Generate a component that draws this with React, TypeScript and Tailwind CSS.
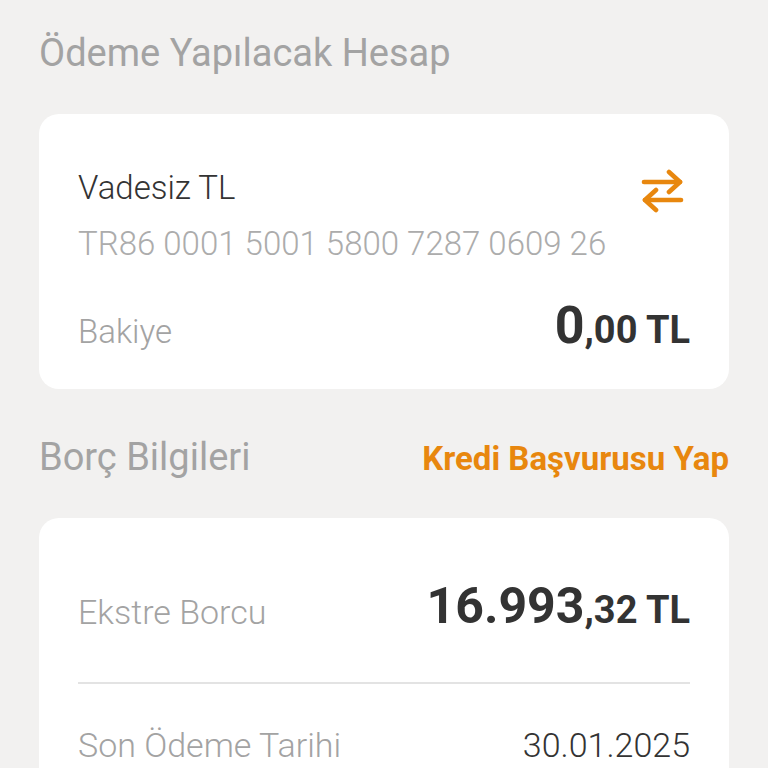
import React from "react";

function SwapIcon() {
  return (
    <svg width="44" height="44" viewBox="0 0 44 44" fill="none" stroke="#e8870e" strokeWidth="4.6" strokeLinecap="round" strokeLinejoin="round">
      <path d="M3 13 H39" />
      <path d="M28 3 L39 13 L28 23" />
      <path d="M40 31 H4" />
      <path d="M15 21 L4 31 L15 41" />
    </svg>
  );
}

export default function App() {
  return (
    <div className="w-[768px] h-[768px] overflow-hidden bg-[#f2f1f0] px-[39px] pt-[29px]" style={{ fontFamily: "Roboto, 'Liberation Sans', sans-serif" }}>
      <div className="text-[38px] leading-[48px] text-[#a3a3a3] font-normal">Ödeme Yapılacak Hesap</div>

      <div className="mt-[37px] bg-white rounded-[20px] h-[275px] px-[39px] pt-[54px]">
        <div className="flex items-start justify-between">
          <div>
            <div className="text-[33px] leading-[40px] text-[#333333] font-light">Vadesiz TL</div>
            <div className="mt-[16px] text-[33px] leading-[40px] text-[#acacac] font-light">TR86 0001 5001 5800 7287 0609 26</div>
          </div>
          <div className="mt-[1px] mr-[5px]">
            <SwapIcon />
          </div>
        </div>
        <div className="mt-[42px] flex items-baseline justify-between">
          <div className="text-[33px] leading-[40px] text-[#a3a3a3] font-light">Bakiye</div>
          <div className="text-[#333333] font-bold leading-[40px]">
            <span className="text-[52px]">0</span>
            <span className="text-[38px]">,00 TL</span>
          </div>
        </div>
      </div>

      <div className="mt-[44px] flex items-baseline justify-between">
        <div className="text-[38px] leading-[48px] text-[#a3a3a3]">Borç Bilgileri</div>
        <div className="text-[33px] leading-[48px] text-[#e8870e] font-bold">Kredi Başvurusu Yap</div>
      </div>

      <div className="mt-[35px] bg-white rounded-[20px] h-[300px] px-[39px] pt-[64px]">
        <div className="flex items-center justify-between h-[60px]">
          <div className="text-[34px] leading-[40px] text-[#a3a3a3] font-light">Ekstre Borcu</div>
          <div className="text-[#333333] font-bold leading-[60px]">
            <span className="text-[50px]">16.993</span>
            <span className="text-[38px]">,32 TL</span>
          </div>
        </div>
        <div className="mt-[40px] h-[2px] bg-[#e3e3e3]" />
        <div className="mt-[41px] flex items-center justify-between">
          <div className="text-[34px] leading-[40px] text-[#a3a3a3] font-light">Son Ödeme Tarihi</div>
          <div className="text-[34px] leading-[40px] text-[#333333] font-light">30.01.2025</div>
        </div>
      </div>
    </div>
  );
}
